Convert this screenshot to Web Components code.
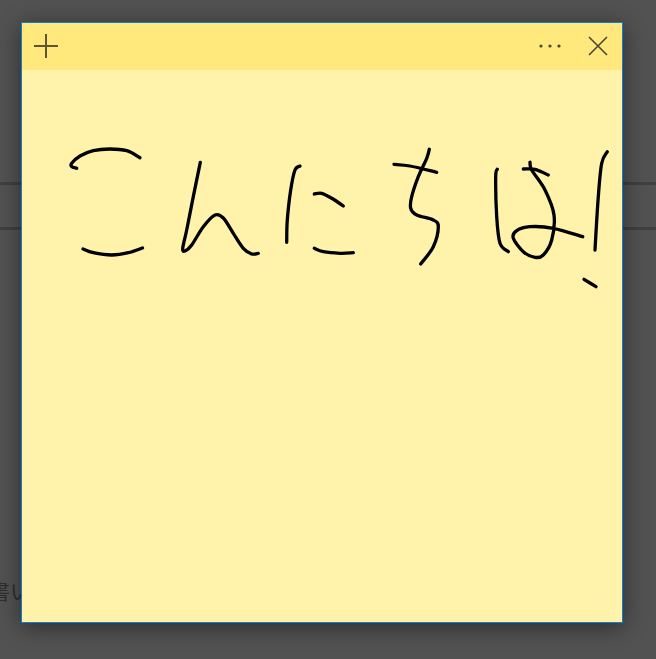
<!DOCTYPE html>
<html>
<head>
<meta charset="utf-8">
<style>
  html, body { margin: 0; height: 100%; background: #525252; overflow: hidden; }
</style>
</head>
<body>
<desk-top>
  <sticky-note>
    <ink-canvas></ink-canvas>
  </sticky-note>
</desk-top>

<template id="deskTpl">
  <style>
    :host { display: block; position: relative; width: 656px; height: 659px; background: #525252; overflow: hidden;
      font-family: "Noto Sans CJK JP", "Noto Sans", sans-serif; color: #2e2e2e; }
    .rows { display: flex; flex-direction: column; padding-top: 182px; }
    .rule { height: 3px; background: #404040; }
    .rule + .rule { margin-top: 42px; }
    .behind { margin: 346px 0 0 -11px; font-size: 21px; line-height: 28px; white-space: nowrap; }
  </style>
  <div class="rows">
    <div class="rule"></div>
    <div class="rule"></div>
    <div class="behind">書い</div>
  </div>
  <slot></slot>
</template>

<template id="noteTpl">
  <style>
    /* the note is a window on the desktop, so it sits over the page */
    :host { display: flex; flex-direction: column; position: absolute; left: 21px; top: 22px; width: 600px; height: 599px;
      border: 1px solid #0f7fd2; background: #fff2ab; box-shadow: 0 4px 22px rgba(0,0,0,.45); }
    .bar { display: flex; align-items: center; box-sizing: border-box; height: 47px; padding-bottom: 1px; flex: none; background: #ffe87c; }
    .bar svg { display: block; flex: none; }
    .add { margin-left: 11px; }
    .more { margin-left: auto; }
    .close { margin: 0 14px 0 25px; }
  </style>
  <div class="bar">
    <svg class="add" width="26" height="26" viewBox="0 0 26 26" fill="none" stroke="#5d5636" stroke-width="2">
      <path d="M13 1V25M1 13H25"/>
    </svg>
    <svg class="more" width="26" height="6" viewBox="0 0 26 6" fill="#4a4630">
      <circle cx="4" cy="3" r="1.6"/><circle cx="13" cy="3" r="1.6"/><circle cx="22" cy="3" r="1.6"/>
    </svg>
    <svg class="close" width="20" height="20" viewBox="0 0 20 20" fill="none" stroke="#4a4630" stroke-width="1.6">
      <path d="M1 1L19 19M19 1L1 19"/>
    </svg>
  </div>
  <slot></slot>
</template>

<template id="inkTpl">
  <style>
    :host { display: block; flex: 1; min-height: 0; }
    svg { display: block; width: 100%; height: 100%; }
    path { fill: none; stroke: #000; stroke-width: 3.3; stroke-linecap: round; stroke-linejoin: round; }
  </style>
  <svg viewBox="22 70 600 552" role="img" aria-label="こんにちは!"></svg>
</template>

<script>
  // ink strokes in page coordinates, as they were drawn on the note
  var STROKES = [
    // こ
    [[76.7,168.3],[71.7,166.7],[71.7,163.3],[80,156],[93.3,150.7],[110,149],[126.7,150.7],[140,157.7]],
    [[83,249],[93.3,252.7],[111.7,255],[128.3,252.7],[142.5,248]],
    // ん
    [[200.3,162.3],[193.3,196.7],[186.7,230],[182.7,248.3],[185,251],[191.7,245],[203.3,226.7],[215,215],[223.3,218],[233.3,233.3],[243.3,248.3],[251.7,254],[258.3,253.3]],
    // に
    [[300,166],[295,170],[290.7,190],[287.3,220],[286.7,242.3]],
    [[314.3,194],[321.7,193.3],[331.7,198.3],[343.3,206]],
    [[314.3,248.3],[323.3,251.7],[340,253.3],[353.3,252.7]],
    // ち
    [[394,164.3],[410,166],[436.7,172.3]],
    [[429.3,149.3],[426.7,158.3],[418.3,176.7],[411.7,196.7],[410.7,208.3],[416.7,215],[433.3,220],[438.3,226.7],[433.3,246.7],[420.7,264]],
    // は
    [[497.3,169.3],[495.7,176.7],[496.7,216.7],[500,243.3],[508.3,251.7]],
    [[523.3,169],[535,169.3],[548.3,175]],
    [[530,162.3],[531.7,170],[545,190],[554,215],[551.7,240],[543.3,255],[535,257.3],[523.3,251.7],[513.3,238.3],[516.7,230.7],[530,226.7],[553.3,228.3],[582.7,236.7]],
    // !
    [[607.3,151.7],[601.7,163.3],[598.3,196.7],[595,250]],
    [[584,279.3],[596,286.7]]
  ];

  function smooth(pts) {
    var d = 'M' + pts[0][0] + ' ' + pts[0][1];
    for (var i = 0; i < pts.length - 1; i++) {
      var p0 = pts[i - 1] || pts[i], p1 = pts[i], p2 = pts[i + 1], p3 = pts[i + 2] || p2;
      d += 'C' + (p1[0] + (p2[0] - p0[0]) / 6).toFixed(1) + ' ' + (p1[1] + (p2[1] - p0[1]) / 6).toFixed(1) +
           ' ' + (p2[0] - (p3[0] - p1[0]) / 6).toFixed(1) + ' ' + (p2[1] - (p3[1] - p1[1]) / 6).toFixed(1) +
           ' ' + p2[0] + ' ' + p2[1];
    }
    return d;
  }

  class DeskTop extends HTMLElement {
    connectedCallback() {
      this.attachShadow({mode: 'open'}).appendChild(document.querySelector('#deskTpl').content.cloneNode(true));
    }
  }
  class StickyNote extends HTMLElement {
    connectedCallback() {
      this.attachShadow({mode: 'open'}).appendChild(document.querySelector('#noteTpl').content.cloneNode(true));
    }
  }
  class InkCanvas extends HTMLElement {
    connectedCallback() {
      var shadow = this.attachShadow({mode: 'open'});
      shadow.appendChild(document.querySelector('#inkTpl').content.cloneNode(true));
      var svg = shadow.querySelector('svg');
      STROKES.forEach(function (pts) {
        var p = document.createElementNS('http://www.w3.org/2000/svg', 'path');
        p.setAttribute('d', smooth(pts));
        svg.appendChild(p);
      });
    }
  }
  customElements.define('desk-top', DeskTop);
  customElements.define('sticky-note', StickyNote);
  customElements.define('ink-canvas', InkCanvas);
</script>
</body>
</html>
